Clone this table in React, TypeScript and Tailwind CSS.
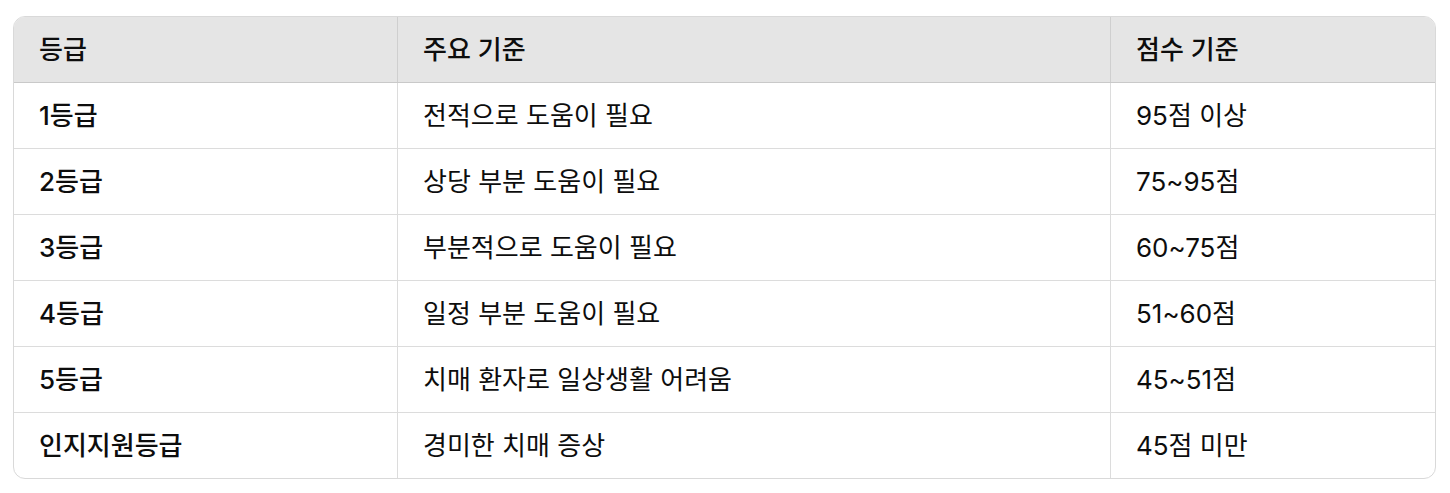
import React from "react";

const rows: [string, string, string][] = [
  ["1등급", "전적으로 도움이 필요", "95점 이상"],
  ["2등급", "상당 부분 도움이 필요", "75~95점"],
  ["3등급", "부분적으로 도움이 필요", "60~75점"],
  ["4등급", "일정 부분 도움이 필요", "51~60점"],
  ["5등급", "치매 환자로 일상생활 어려움", "45~51점"],
  ["인지지원등급", "경미한 치매 증상", "45점 미만"],
];

export default function App() {
  return (
    <div
      className="w-[1450px] h-[493px] bg-white pt-[16px] pl-[13px]"
      style={{ fontFamily: 'Inter, "Noto Sans CJK KR", sans-serif' }}
    >
      <div className="w-[1423px] rounded-xl border border-[#d9d9d9] overflow-hidden text-[26px] leading-none text-[#0d0d0d]">
        <div className="grid grid-cols-[384px_713px_1fr] bg-[#e5e5e5] border-b border-[#c9c9c9]">
          <div className="h-[65px] flex items-center px-[25px] border-r border-[#cfcfcf] font-medium">등급</div>
          <div className="h-[65px] flex items-center px-[25px] border-r border-[#cfcfcf] font-medium">주요 기준</div>
          <div className="h-[65px] flex items-center px-[25px] font-medium">점수 기준</div>
        </div>
        {rows.map((r, i) => (
          <div
            key={i}
            className={
              i < rows.length - 1
                ? "grid grid-cols-[384px_713px_1fr] border-b border-[#dcdcdc]"
                : "grid grid-cols-[384px_713px_1fr]"
            }
          >
            <div className="h-[65px] flex items-center px-[25px] border-r border-[#dcdcdc] font-medium">{r[0]}</div>
            <div className="h-[65px] flex items-center px-[25px] border-r border-[#dcdcdc]">{r[1]}</div>
            <div className="h-[65px] flex items-center px-[25px]">{r[2]}</div>
          </div>
        ))}
      </div>
    </div>
  );
}
